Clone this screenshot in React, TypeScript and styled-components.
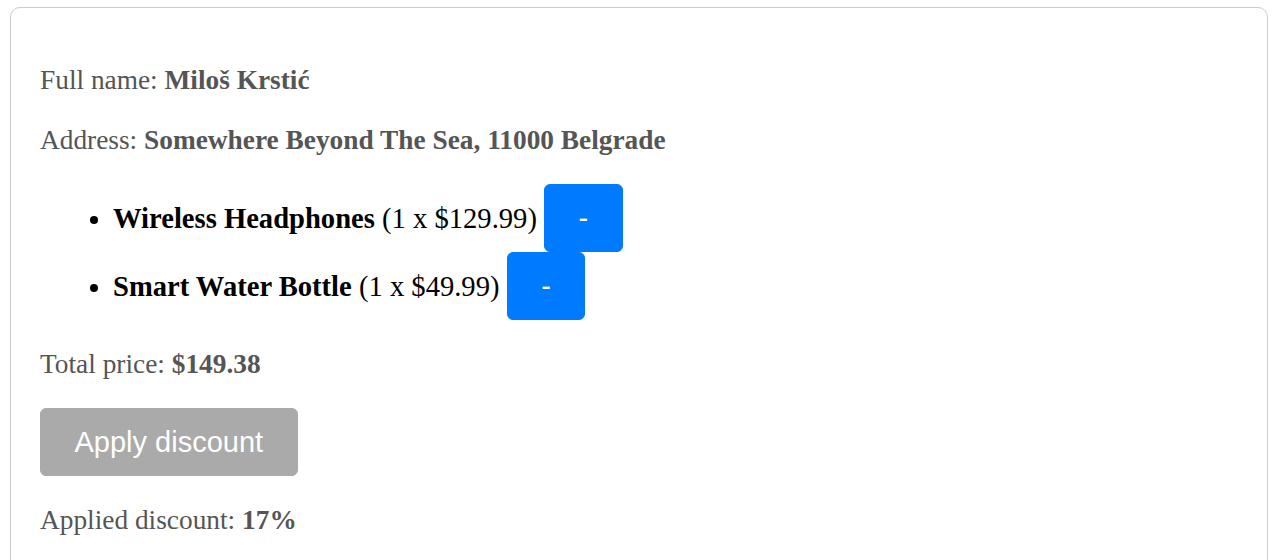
import React from 'react'
import styled, { createGlobalStyle } from 'styled-components'

const GlobalStyle = createGlobalStyle`
  html, body {
    margin: 0;
    padding: 0;
    background: #fff;
  }
  body {
    padding: 7px 8px 0 10px;
    font-family: "Liberation Serif", "Times New Roman", serif;
    font-size: 27.35px;
  }
`

const items = [
  { name: 'Wireless Headphones', qty: 1, price: 129.99 },
  { name: 'Smart Water Bottle', qty: 1, price: 49.99 },
]

export default function App() {
  return (
    <>
      <GlobalStyle />
      <Card>
        <Line>
          Full name: <b>Miloš Krstić</b>
        </Line>
        <Line>
          Address: <b>Somewhere Beyond The Sea, 11000 Belgrade</b>
        </Line>
        <ItemList>
          {items.map(item => (
            <Item key={item.name}>
              <b>{item.name}</b> ({item.qty} x ${item.price.toFixed(2)}){' '}
              <Button $variant="primary">-</Button>
            </Item>
          ))}
        </ItemList>
        <Line>
          Total price: <b>$149.38</b>
        </Line>
        <ButtonRow>
          <Button $variant="disabled" disabled>
            Apply discount
          </Button>
        </ButtonRow>
        <Line>
          Applied discount: <b>17%</b>
        </Line>
      </Card>
    </>
  )
}

const Card = styled.div`
  border: solid 1px #ccc;
  border-radius: 10px;
  padding: 28px 29px 40px;
  min-height: 600px;
  color: #555;

  > * {
    margin: 28px 0;
  }
`

const Line = styled.p`
  line-height: 32px;
`

const ItemList = styled.ul`
  padding-left: 73px;
  color: #000;
  font-size: 28.6px;
`

const Item = styled.li`
  line-height: 32px;
`

const ButtonRow = styled.div`
  display: flex;
`

const Button = styled.button<{ $variant: 'primary' | 'disabled' }>`
  display: inline-block;
  margin: 0;
  padding: 16.5px 33.5px;
  border: solid 1.5px ${p => (p.$variant === 'primary' ? '#007bff' : '#aaa')};
  border-radius: 6px;
  background-color: ${p => (p.$variant === 'primary' ? '#007bff' : '#aaa')};
  color: #fff;
  font-family: "Liberation Sans", Arial, sans-serif;
  font-size: 29px;
  line-height: 33px;
  cursor: pointer;

  :disabled {
    cursor: default;
  }
`
